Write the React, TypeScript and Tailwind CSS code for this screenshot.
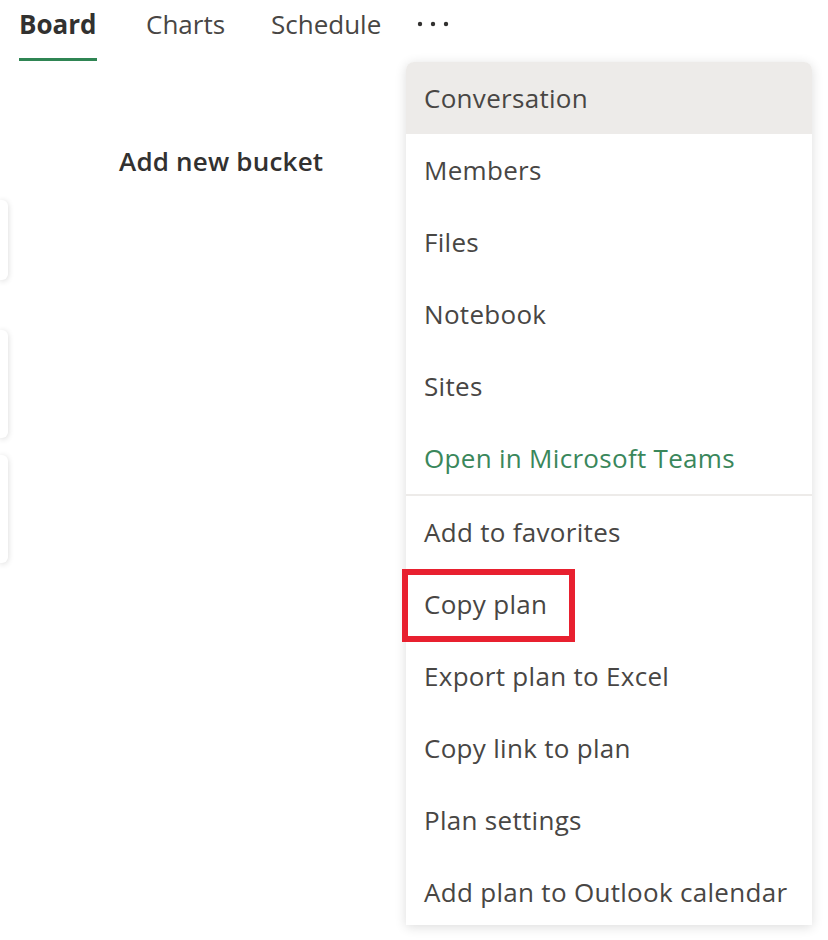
import React from "react";

const items1 = ["Conversation", "Members", "Files", "Notebook", "Sites"];
const items2 = [
  "Add to favorites",
  "Copy plan",
  "Export plan to Excel",
  "Copy link to plan",
  "Plan settings",
  "Add plan to Outlook calendar",
];

function Dots() {
  return (
    <svg width="34" height="8" viewBox="0 0 34 8" aria-hidden>
      <circle cx="4" cy="4" r="2.2" fill="#323130" />
      <circle cx="17" cy="4" r="2.2" fill="#323130" />
      <circle cx="30" cy="4" r="2.2" fill="#323130" />
    </svg>
  );
}

export default function App() {
  return (
    <div
      className="relative w-[828px] h-[940px] bg-white overflow-hidden text-[#323130]"
      style={{ fontFamily: '"Open Sans", "Noto Sans", sans-serif' }}
    >
      {/* Tabs */}
      <nav className="flex h-[62px] pl-[19px] text-[26px] leading-[36px]">
        <div className="w-[127px]">
          <div className="inline-block h-[61px] pt-[6px] pb-[16px] border-b-[3px] border-[#2f8553] font-bold">
            Board
          </div>
        </div>
        <div className="w-[125px] pt-[6px] text-[#484644]">Charts</div>
        <div className="w-[145px] pt-[6px] text-[#484644]">Schedule</div>
        <div className="pt-[20px]">
          <Dots />
        </div>
      </nav>

      {/* Board body */}
      <div className="flex">
        <div className="flex flex-col mt-[138px] w-[8px]">
          <div className="h-[80px] bg-white rounded-r-[6px] shadow-[0_1px_6px_rgba(0,0,0,0.16)]" />
          <div className="h-[108px] mt-[50px] bg-white rounded-r-[6px] shadow-[0_1px_6px_rgba(0,0,0,0.16)]" />
          <div className="h-[108px] mt-[17px] bg-white rounded-r-[6px] shadow-[0_1px_6px_rgba(0,0,0,0.16)]" />
        </div>
        <div className="ml-[111px] mt-[81px] text-[26px] leading-[36px] font-semibold tracking-[0.2px] text-[#323130]">
          Add new bucket
        </div>
      </div>

      {/* Overflow menu */}
      <div className="absolute left-[406px] top-[62px] w-[406px] h-[863px] bg-white rounded-t-[8px] overflow-hidden shadow-[0_2px_12px_rgba(0,0,0,0.14)] text-[26px] tracking-[0.3px] text-[#484644]">
        {items1.map((t, i) => (
          <div
            key={t}
            className={`h-[72px] flex items-center pl-[18px] ${i === 0 ? "bg-[#edebe9]" : ""}`}
          >
            {t}
          </div>
        ))}
        <div className="h-[72px] flex items-center pl-[18px] text-[#3a875b]">
          Open in Microsoft Teams
        </div>
        <div className="h-[2px] bg-[#edebe9]" />
        {items2.map((t) => (
          <div key={t} className="h-[72px] flex items-center pl-[18px]">
            {t}
          </div>
        ))}
      </div>

      {/* Annotation box */}
      <div className="absolute left-[402px] top-[569px] w-[173px] h-[73px] border-[6px] border-[#e8202f]" />
    </div>
  );
}
